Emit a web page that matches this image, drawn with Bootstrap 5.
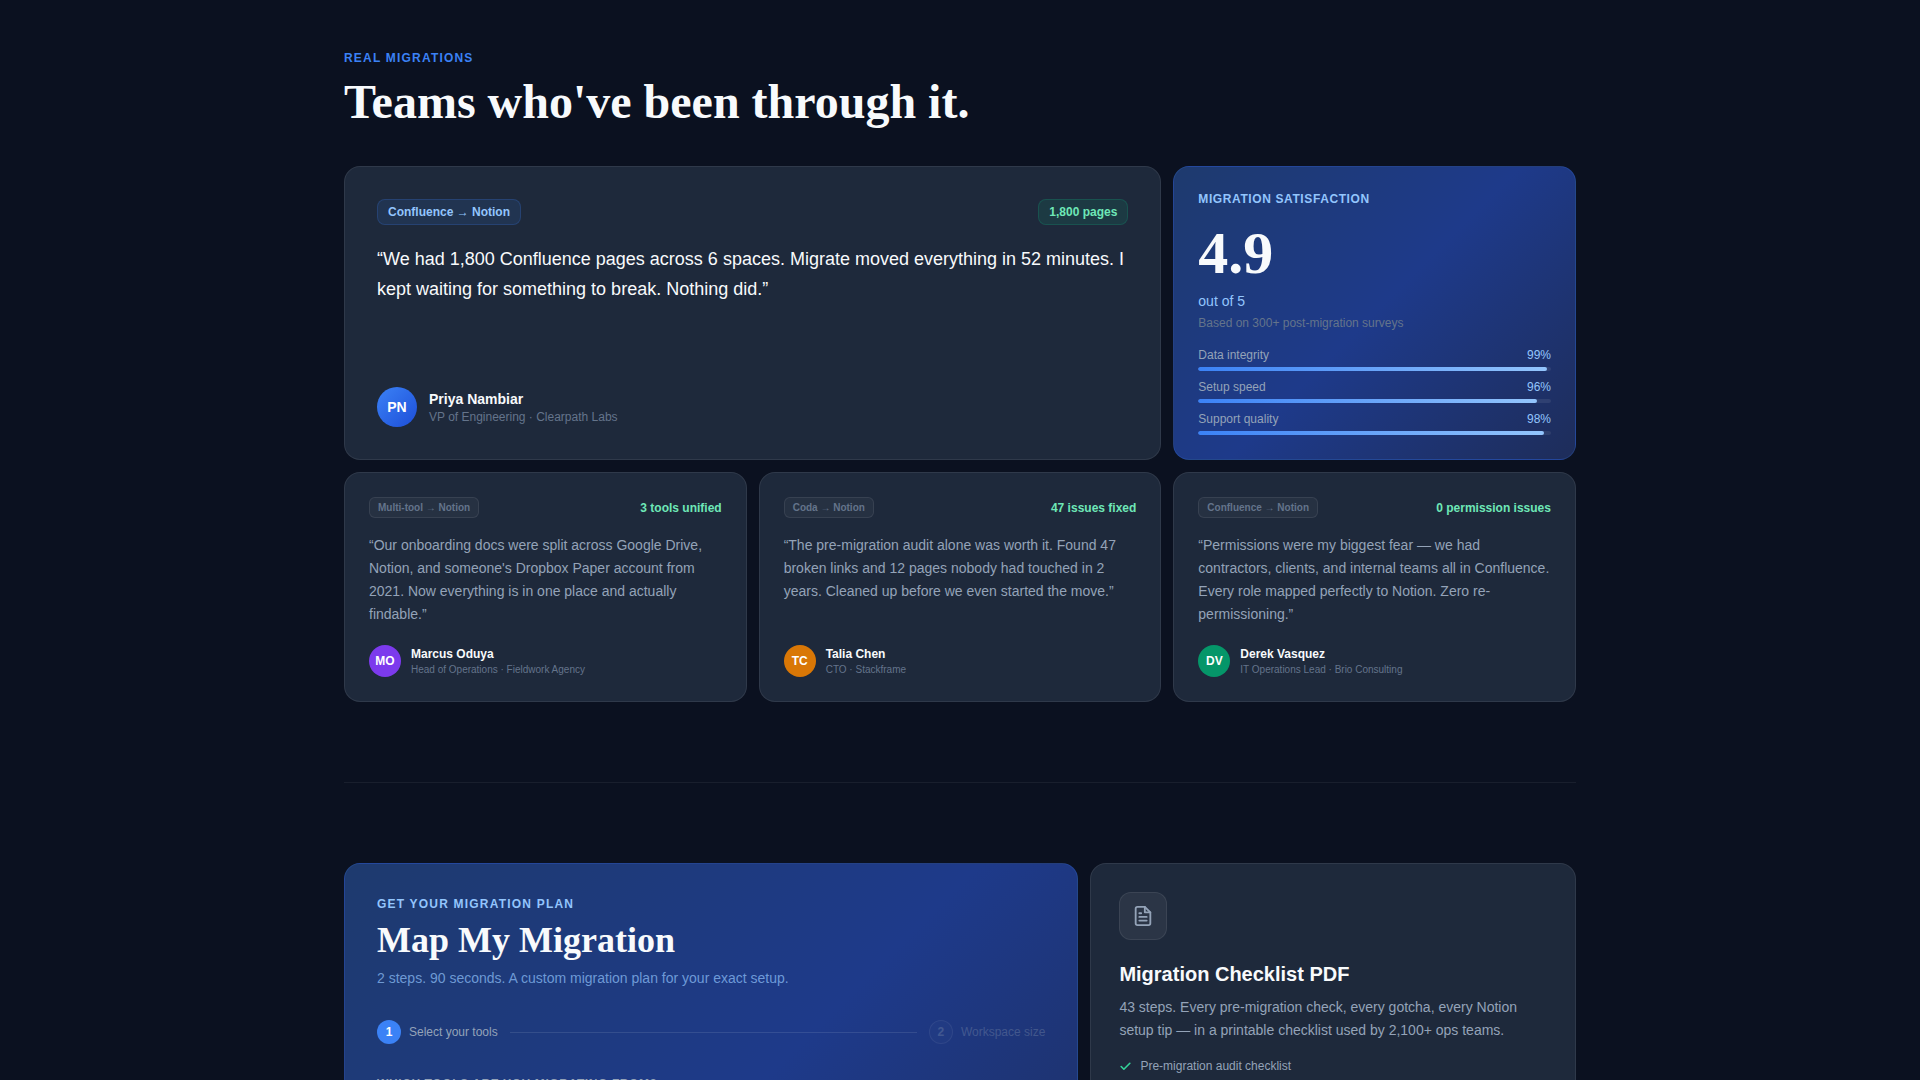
<!DOCTYPE html>
<html lang="en">
<head>
<meta charset="utf-8">
<meta name="viewport" content="width=device-width, initial-scale=1">
<title>Migrate</title>
<link href="https://cdn.jsdelivr.net/npm/bootstrap@5.3.0/dist/css/bootstrap.min.css" rel="stylesheet">
<style>
:root { --t-hi: #f8fafc; --t-mid: #94a3b8; --t-low: #64748b; --sky: #93c5fd; --mint: #6ee7b7; }
body { background: #0b1120; color: var(--t-hi); font-family: "Liberation Sans", Arial, sans-serif; font-size: 14px; line-height: 20px; }
.wrap { max-width: 1280px; padding: 50px 24px 80px; }
.serif { font-family: "Liberation Serif", "Times New Roman", serif; font-weight: 700; }
.t10 { font-size: 10px; line-height: 15px; }
.t12 { font-size: 12px; line-height: 16px; }
.t14 { font-size: 14px; line-height: 20px; }
.t20 { font-size: 20px; line-height: 28px; }
.wide { letter-spacing: 1.2px; }
.wider { letter-spacing: .6px; }
.headline { font-size: 48px; line-height: 48px; margin: 12px 0 40px; }
.subhead { font-size: 36px; line-height: 40px; }
.score { font-size: 60px; line-height: 60px; }
.hi { color: var(--t-hi); } .mid { color: var(--t-mid); } .low { color: var(--t-low); }
.sky { color: var(--sky); } .mint { color: var(--mint); } .blue { color: #3b82f6; }
.sky-dim { color: rgba(147,197,253,.7); }
.tiles { display: grid; grid-template-columns: repeat(3, minmax(0, 1fr)); gap: 12px; }
.plan { display: grid; grid-template-columns: repeat(5, minmax(0, 1fr)); gap: 12px; }
.span2 { grid-column: span 2; } .span3 { grid-column: span 3; }
.tile { background: #1e293b; border: 1px solid rgba(255,255,255,.08); border-radius: 16px; }
.tile-blue { background: linear-gradient(135deg, #1e3a6e 0%, #1e3a8a 50%, #1e2d5a 100%); border: 1px solid rgba(59,130,246,.2); border-radius: 16px; }
.tall { min-height: 540px; }
.pad24 { padding: 24px; } .pad28 { padding: 28px; } .pad32 { padding: 32px; }
.chip { border: 1px solid; border-radius: 8px; padding: 4px 10px; font-weight: 600; }
.chip-blue { background: rgba(59,130,246,.12); border-color: rgba(59,130,246,.2); color: var(--sky); }
.chip-green { background: rgba(16,185,129,.12); border-color: rgba(16,185,129,.2); color: var(--mint); }
.chip-grey { background: rgba(255,255,255,.04); border-color: rgba(255,255,255,.08); color: var(--t-low); padding: 2px 8px; border-radius: 6px; }
.quote-lg { font-size: 18px; line-height: 30px; margin: 19px 0 0; }
.quote { font-size: 14px; line-height: 23px; margin: 16px 0 19px; }
.face { border-radius: 50%; flex: none; display: flex; align-items: center; justify-content: center; font-weight: 700; color: #fff; }
.face-lg { width: 40px; height: 40px; background: linear-gradient(135deg, #3b82f6, #1d4ed8); }
.face-sm { width: 32px; height: 32px; }
.violet { background: #7c3aed; } .amber { background: #d97706; } .green { background: #059669; }
.gap10 { gap: 10px; } .gap12 { gap: 12px; }
.meter { height: 4px; border-radius: 4px; background: rgba(255,255,255,.08); overflow: hidden; }
.meter > div { height: 100%; border-radius: 4px; background: linear-gradient(90deg, #3b82f6, #93c5fd); }
.rule { height: 1px; background: rgba(255,255,255,.06); margin: 80px 0; }
.steps { margin: 32px 0; }
.dot { width: 24px; height: 24px; background: #3b82f6; font-weight: 700; }
.dot-off { background: rgba(255,255,255,.06); border: 1px solid rgba(255,255,255,.2); color: var(--t-mid); }
.off { opacity: .3; }
.link-line { height: 1px; background: rgba(255,255,255,.1); }
.icon-box { width: 48px; height: 48px; border-radius: 12px; background: rgba(255,255,255,.06); border: 1px solid rgba(255,255,255,.08); color: var(--t-mid); margin-bottom: 20px; }
</style>
</head>
<body>
<main class="wrap container-fluid">
  <section>
    <p class="t12 fw-bold wide blue mb-0">REAL MIGRATIONS</p>
    <h2 class="serif headline hi">Teams who've been through it.</h2>
    <div class="tiles">
      <article class="tile span2 pad32 d-flex flex-column">
        <div class="d-flex justify-content-between">
          <span class="chip chip-blue t12">Confluence → Notion</span>
          <span class="chip chip-green t12">1,800 pages</span>
        </div>
        <p class="quote-lg hi">“We had 1,800 Confluence pages across 6 spaces. Migrate moved everything in 52 minutes. I kept waiting for something to break. Nothing did.”</p>
        <div class="d-flex align-items-center gap12 mt-auto">
          <span class="face face-lg t14">PN</span>
          <div><div class="t14 fw-bold hi">Priya Nambiar</div><div class="t12 low">VP of Engineering · Clearpath Labs</div></div>
        </div>
      </article>
      <article class="tile-blue pad24">
        <div class="t12 fw-bold wider sky">MIGRATION SATISFACTION</div>
        <div class="serif score hi mt-3">4.9</div>
        <div class="t14 sky mt-2">out of 5</div>
        <div class="t12 low mt-1">Based on 300+ post-migration surveys</div>
        <div class="d-flex flex-column gap-2 mt-3">
          <div><div class="t12 d-flex justify-content-between mb-1"><span class="mid">Data integrity</span><span class="sky">99%</span></div><div class="meter"><div style="width:99%"></div></div></div>
          <div><div class="t12 d-flex justify-content-between mb-1"><span class="mid">Setup speed</span><span class="sky">96%</span></div><div class="meter"><div style="width:96%"></div></div></div>
          <div><div class="t12 d-flex justify-content-between mb-1"><span class="mid">Support quality</span><span class="sky">98%</span></div><div class="meter"><div style="width:98%"></div></div></div>
        </div>
      </article>
      <article class="tile pad24 d-flex flex-column">
        <div class="d-flex justify-content-between align-items-center"><span class="chip chip-grey t10">Multi-tool → Notion</span><span class="t12 fw-bold mint">3 tools unified</span></div>
        <p class="quote mid">“Our onboarding docs were split across Google Drive, Notion, and someone's Dropbox Paper account from 2021. Now everything is in one place and actually findable.”</p>
        <div class="d-flex align-items-center gap10 mt-auto"><span class="face face-sm t12 violet">MO</span><div><div class="t12 fw-bold hi">Marcus Oduya</div><div class="t10 low">Head of Operations · Fieldwork Agency</div></div></div>
      </article>
      <article class="tile pad24 d-flex flex-column">
        <div class="d-flex justify-content-between align-items-center"><span class="chip chip-grey t10">Coda → Notion</span><span class="t12 fw-bold mint">47 issues fixed</span></div>
        <p class="quote mid">“The pre-migration audit alone was worth it. Found 47 broken links and 12 pages nobody had touched in 2 years. Cleaned up before we even started the move.”</p>
        <div class="d-flex align-items-center gap10 mt-auto"><span class="face face-sm t12 amber">TC</span><div><div class="t12 fw-bold hi">Talia Chen</div><div class="t10 low">CTO · Stackframe</div></div></div>
      </article>
      <article class="tile pad24 d-flex flex-column">
        <div class="d-flex justify-content-between align-items-center"><span class="chip chip-grey t10">Confluence → Notion</span><span class="t12 fw-bold mint">0 permission issues</span></div>
        <p class="quote mid">“Permissions were my biggest fear — we had contractors, clients, and internal teams all in Confluence. Every role mapped perfectly to Notion. Zero re-permissioning.”</p>
        <div class="d-flex align-items-center gap10 mt-auto"><span class="face face-sm t12 green">DV</span><div><div class="t12 fw-bold hi">Derek Vasquez</div><div class="t10 low">IT Operations Lead · Brio Consulting</div></div></div>
      </article>
    </div>
  </section>
  <div class="rule"></div>
  <section class="plan">
    <article class="tile-blue span3 pad32 tall">
      <p class="t12 fw-bold wide sky mb-2">GET YOUR MIGRATION PLAN</p>
      <h2 class="serif subhead hi mb-2">Map My Migration</h2>
      <p class="t14 sky-dim mb-0">2 steps. 90 seconds. A custom migration plan for your exact setup.</p>
      <div class="steps d-flex align-items-center gap12 t12">
        <div class="d-flex align-items-center gap-2"><span class="face dot">1</span><span class="mid">Select your tools</span></div>
        <div class="link-line flex-grow-1"></div>
        <div class="d-flex align-items-center gap-2 off"><span class="face dot dot-off">2</span><span class="mid">Workspace size</span></div>
      </div>
      <p class="t12 fw-bold wider mid mb-0">WHICH TOOLS ARE YOU MIGRATING FROM?</p>
    </article>
    <article class="tile span2 pad28">
      <div class="icon-box d-flex align-items-center justify-content-center">
        <svg width="22" height="22" viewBox="0 0 24 24" fill="none" stroke="currentColor" stroke-width="2" stroke-linecap="round" stroke-linejoin="round" aria-hidden="true"><path d="M14 2H6a2 2 0 0 0-2 2v16a2 2 0 0 0 2 2h12a2 2 0 0 0 2-2V8z"/><path d="M14 2v6h6M16 13H8M16 17H8M10 9H8"/></svg>
      </div>
      <h3 class="t20 fw-bold hi mb-2">Migration Checklist PDF</h3>
      <p class="quote mid mt-0 mb-3">43 steps. Every pre-migration check, every gotcha, every Notion setup tip — in a printable checklist used by 2,100+ ops teams.</p>
      <ul class="list-unstyled mb-0 t12 mid">
        <li class="d-flex align-items-center gap-2"><svg width="13" height="13" viewBox="0 0 24 24" fill="none" stroke="#34d399" stroke-width="3" stroke-linecap="round" stroke-linejoin="round" aria-hidden="true"><path d="M20 6 9 17l-5-5"/></svg>Pre-migration audit checklist</li>
      </ul>
    </article>
  </section>
</main>
<script src="https://cdn.jsdelivr.net/npm/bootstrap@5.3.0/dist/js/bootstrap.bundle.min.js"></script>
</body>
</html>
